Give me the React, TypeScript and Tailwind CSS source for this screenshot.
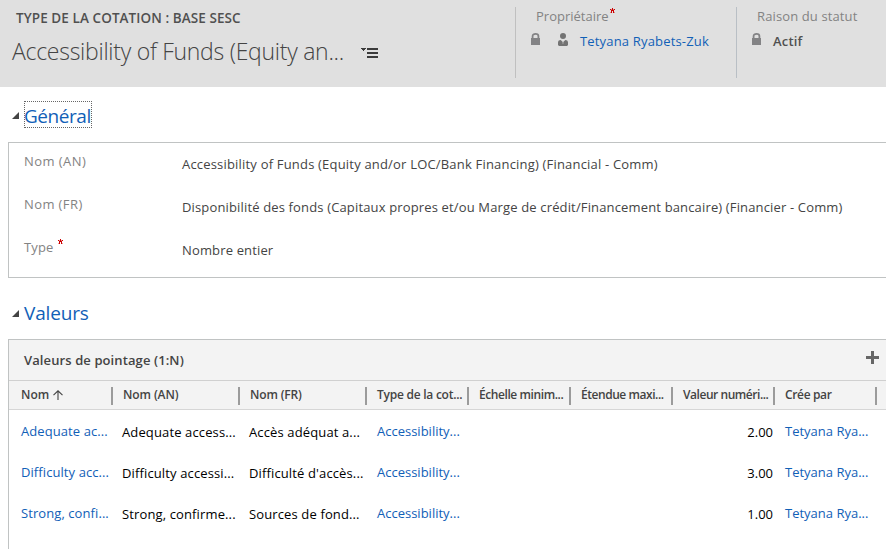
const LockIcon = () => (
  <svg width="10" height="13" viewBox="0 0 10 13" className="block shrink-0">
    <path d="M1.6 6V3C1.6 1.6 2.8 .9 4.5 .9S7.4 1.6 7.4 3V6" fill="none" stroke="#838385" strokeWidth="1.8" />
    <rect x="0" y="5" width="9" height="7" fill="#838385" />
  </svg>
);

const PersonIcon = () => (
  <svg width="10" height="13" viewBox="0 0 10 13" className="block shrink-0">
    <circle cx="5" cy="3" r="3" fill="#737373" />
    <path d="M0 12V9.5C0 7.8 1.2 7 2.7 7L5 9.3 7.3 7C8.8 7 10 7.8 10 9.5V12L9 13H1Z" fill="#737373" />
    <path d="M4.3 9.5h1.4L5 11Z" fill="#e0e0e0" />
  </svg>
);

const MenuIcon = () => (
  <svg width="18" height="11" viewBox="0 0 18 11" className="block shrink-0" shapeRendering="crispEdges">
    <path d="M0 0H5V1H4V2H3V3H2V2H1V1H0Z" fill="#3b3b3b" />
    <path d="M6 0h11v2H6zM6 4h11v2H6zM6 8h11v2H6z" fill="#3b3b3b" />
  </svg>
);

const Star = () => (
  <svg width="5" height="5" viewBox="0 0 5 5" className="block shrink-0" shapeRendering="crispEdges">
    <path d="M2 0h1v1H2zM0 1h1v1H0zM4 1h1v1H4zM1 2h3v1H1zM2 1h1v1H2zM1 3h1v2H1zM3 3h1v2H3z" fill="#cc0000" />
    <path d="M1 1h1v1H1zM3 1h1v1H3zM0 4h1v1H0zM4 4h1v1H4z" fill="#cc0000" opacity=".4" />
  </svg>
);

const SectionArrow = () => (
  <svg width="7" height="7" viewBox="0 0 7 7" className="block shrink-0">
    <path d="M7 0V7H0Z" fill="#444444" />
  </svg>
);

const fields = [
  { label: "Nom (AN)", value: "Accessibility of Funds (Equity and/or LOC/Bank Financing) (Financial - Comm)", labelTrack: "tracking-[0.45px]", track: "tracking-[0.19px]", required: false },
  { label: "Nom (FR)", value: "Disponibilité des fonds (Capitaux propres et/ou Marge de crédit/Financement bancaire) (Financier - Comm)", labelTrack: "tracking-[0.4px]", track: "tracking-[0.15px]", required: false },
  { label: "Type", value: "Nombre entier", labelTrack: "tracking-[0.15px]", track: "tracking-[0.15px]", required: true },
];

const columns = [
  { name: "Nom", track: "tracking-[0px]" },
  { name: "Nom (AN)", track: "tracking-[-0.1px]" },
  { name: "Nom (FR)", track: "tracking-[-0.15px]" },
  { name: "Type de la cot...", track: "tracking-[-0.25px]" },
  { name: "Échelle minim...", track: "tracking-[-0.42px]" },
  { name: "Étendue maxi...", track: "tracking-[-0.45px]" },
  { name: "Valeur numéri...", track: "tracking-[-0.45px]" },
  { name: "Crée par", track: "tracking-[-0.35px]" },
];

const rows = [
  ["Adequate ac...", "Adequate access...", "Accès adéquat a...", "2.00"],
  ["Difficulty acc...", "Difficulty accessi...", "Difficulté d'accès...", "3.00"],
  ["Strong, confi...", "Strong, confirme...", "Sources de fond...", "1.00"],
];

const grid = "grid grid-cols-[104px_127px_127px_102px_102px_102px_102px_102px]";

export default function App() {
  return (
    <div className="h-[549px] w-[886px] overflow-hidden whitespace-nowrap bg-white font-['Open_Sans','Noto_Sans',sans-serif] text-[13px] leading-5 text-[#444444]">
      <header className="flex h-[87px] bg-[#e0e0e0]">
        <div className="w-[515px]">
          <div className="pl-4 pt-2 text-[13.5px] font-semibold tracking-[0.08px] text-[#505050]">TYPE DE LA COTATION : BASE SESC</div>
          <div className="flex pl-3 pt-[7px]">
            <h1 className="w-[349px] text-[23px] font-light leading-8 tracking-[-0.27px] text-[#444444]">Accessibility of Funds (Equity an...</h1>
            <div className="pt-[13px]"><MenuIcon /></div>
          </div>
        </div>
        <div className="mt-[7px] h-[71px] w-[221px] border-l border-[#c0c0c0] text-[#838383]">
          <div className="-mt-px flex h-5 pl-5">
            <span>Propriétaire</span>
            <div className="pl-px pt-[2px]"><Star /></div>
          </div>
          <div className="flex pl-[15px] pt-[5px]">
            <div className="pt-[2px]"><LockIcon /></div>
            <div className="pl-[17px] pt-[2px]"><PersonIcon /></div>
            <a className="pl-[12px] tracking-[0.17px] text-[#1160b7]">Tetyana Ryabets-Zuk</a>
          </div>
        </div>
        <div className="mt-[7px] h-[71px] w-[150px] border-l border-[#b9bfc5] text-[#838383]">
          <div className="-mt-px h-5 pl-5 tracking-[0.12px]">Raison du statut</div>
          <div className="flex pl-[15px] pt-[5px]">
            <div className="pt-[2px]"><LockIcon /></div>
            <span className="pl-[11px] font-semibold tracking-[0.2px] text-[#505050]">Actif</span>
          </div>
        </div>
      </header>

      <section>
        <h2 className="flex h-[55px] items-start pl-3 pt-[14px]">
          <div className="pt-[11px]"><SectionArrow /></div>
          <span className="ml-[5px] h-[27px] w-[68px] border border-dotted border-[#666666] text-[19px] leading-[28px] tracking-[-0.45px] text-[#1160b7]">
            <span className="-ml-px">Général</span>
          </span>
        </h2>
        <div className="ml-2 h-[136px] border-y border-l border-[#c0c3c3] pl-[15px] pt-2">
          {fields.map((f) => (
            <div key={f.label} className="flex h-[43px]">
              <div className="flex w-[158px] text-[#838383]">
                <span className={f.labelTrack}>{f.label}</span>
                {f.required && <div className="pl-1 pt-[2px]"><Star /></div>}
              </div>
              <div className={`pt-[3px] ${f.track}`}>{f.value}</div>
            </div>
          ))}
        </div>
      </section>

      <section>
        <h2 className="flex h-[61px] items-start pl-3 pt-[22px]">
          <div className="pt-[10px]"><SectionArrow /></div>
          <span className="ml-[5px] text-[19px] leading-[27px] tracking-[-0.15px] text-[#1160b7]">Valeurs</span>
        </h2>
        <div className="ml-2 h-[220px] border-l border-t border-[#c0c3c3]">
          <div className="flex h-[41px] items-start justify-between border-b border-[#d0d0d0] bg-[#f3f3f3] pl-[15px] pr-[7px] pt-[10px] font-semibold">
            <span className="tracking-[0.1px]">Valeurs de pointage (1:N)</span>
            <svg width="13" height="13" viewBox="0 0 13 13" className="mt-[1px] block" shapeRendering="crispEdges">
              <path d="M5 0h3v5h5v3H8v5H5V8H0V5h5z" fill="#666666" />
            </svg>
          </div>
          <div className={`${grid} h-[29px] border-b border-[#d6d6d6] bg-[#f3f3f3] text-[12px] font-semibold`}>
            {columns.map((c, i) => (
              <div key={c.name} className={`flex items-start justify-between pt-1 ${i === 0 ? "pl-3" : "pl-[10px]"}`}>
                <span className={`flex ${c.track}`}>
                  {c.name}
                  {i === 0 && (
                    <svg width="10" height="10" viewBox="0 0 10 10" className="ml-1 mt-[5px] block">
                      <path d="M5 10V1M.5 5.2L5 .8L9.5 5.2" fill="none" stroke="#444444" strokeWidth="1.1" />
                    </svg>
                  )}
                </span>
                <div className="mt-[2px] h-[18px] w-[2px] shrink-0 bg-[#9b9b9b]" />
              </div>
            ))}
          </div>
          <div className="pt-px text-black">
            {rows.map((r) => (
              <div key={r[0]} className={`${grid} h-[41px] pt-[10px]`}>
                <a className="pl-3 tracking-[0.08px] text-[#1160b7]">{r[0]}</a>
                <span className="pl-[9px] pt-px tracking-[0.13px]">{r[1]}</span>
                <span className="pl-[9px] pt-px tracking-[0.13px]">{r[2]}</span>
                <a className="pl-[10px] text-[#1160b7]">Accessibility...</a>
                <span />
                <span />
                <span className="pr-[2px] pt-px text-right">{r[3]}</span>
                <a className="pl-[10px] text-[#1160b7]">Tetyana Rya...</a>
              </div>
            ))}
          </div>
        </div>
      </section>
    </div>
  );
}
